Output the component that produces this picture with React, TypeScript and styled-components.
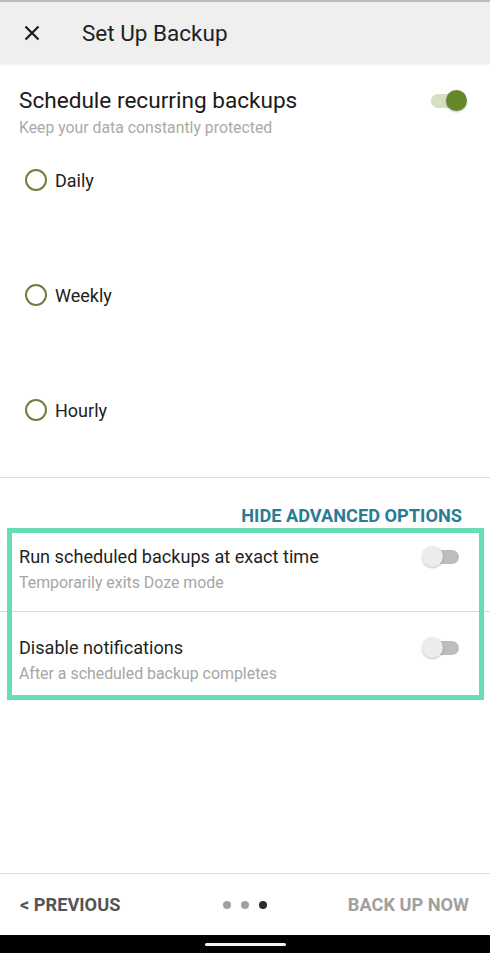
import * as React from "react"
import styled, { createGlobalStyle } from "styled-components"

const GlobalStyle = createGlobalStyle`
html, body {
    margin: 0;
    padding: 0;
    background: #fff;
}
body {
    font-family: Roboto, "Noto Sans", "Liberation Sans", sans-serif;
    color: #212121;
}
`

const Page = styled("div")`
display: flex;
flex-direction: column;
min-height: 953px;
width: 490px;
background: #fff;
`

const Header = styled("header")`
display: flex;
align-items: center;
height: 62px;
border-top: 2px solid #bdbdbd;
background: #efefef;
box-shadow: 0 1px 2px rgba(0, 0, 0, 0.06);
`

const CloseButton = styled("button")`
display: flex;
align-items: center;
justify-content: center;
width: 24px;
height: 24px;
margin: 0 38px 0 20px;
padding: 0;
border: none;
background: none;
`

const Title = styled("h1")`
margin: 0;
font-size: 22.5px;
font-weight: 400;
color: #212121;
`

const Schedule = styled("section")`
padding: 23px 0 0 19px;
`

const ScheduleHead = styled("div")`
display: flex;
align-items: flex-start;
justify-content: space-between;
padding-right: 28px;
`

const HeadTitle = styled("div")`
font-size: 22.6px;
line-height: 28px;
color: #1a1a1a;
`

const HeadSub = styled("div")`
margin-top: 3px;
font-size: 15.8px;
line-height: 20px;
color: #aaaaaa;
`

const RadioList = styled("div")`
display: flex;
flex-direction: column;
gap: 67px;
margin-top: 18px;
padding-bottom: 43px;
`

const RadioRow = styled("label")`
display: flex;
align-items: center;
height: 48px;
gap: 8px;
padding-left: 6px;
font-size: 18px;
color: #212121;
`

const RadioCircle = styled("span")`
box-sizing: border-box;
width: 22px;
height: 22px;
border-radius: 50%;
border: 2.5px solid #6f7f3f;
`

const Divider = styled("hr")`
margin: 0;
border: none;
border-top: 1px solid #dcdcdc;
`

const AdvancedLink = styled("div")`
margin-top: 28px;
padding-right: 28px;
text-align: right;
font-size: 18.2px;
line-height: 20px;
font-weight: 700;
color: #2a7c95;
`

const Advanced = styled("div")`
position: relative;

&::after {
    content: "";
    position: absolute;
    top: 2px;
    left: 7px;
    right: 6px;
    bottom: 2px;
    border: 5px solid #66dcb7;
    pointer-events: none;
}
`

const OptionRow = styled("div")`
display: flex;
align-items: flex-start;
justify-content: space-between;
padding: 20px 31px 18px 19px;

& + hr + & {
    padding-top: 25px;
}
`

const OptionTitle = styled("div")`
font-size: 18.1px;
line-height: 22px;
color: #1f1f1f;
`

const OptionSub = styled("div")`
margin-top: 5px;
font-size: 15.9px;
line-height: 20px;
color: #a6a6a6;
`

const SwitchTrack = styled("span")<{ $on?: boolean }>`
position: relative;
display: block;
flex-shrink: 0;
width: 31px;
height: 14px;
margin-top: ${p => (p.$on ? "7px" : "4px")};
border-radius: 7px;
background: ${p => (p.$on ? "#d4dfc4" : "#bdbdbd")};
`

const SwitchThumb = styled("span")<{ $on?: boolean }>`
position: absolute;
top: -4px;
left: ${p => (p.$on ? "15px" : "-6px")};
width: 21px;
height: 21px;
border-radius: 50%;
background: ${p => (p.$on ? "#66872c" : "#ececec")};
box-shadow: 0 1px 2px rgba(0, 0, 0, 0.25);
`

const Spacer = styled("div")`
flex-grow: 1;
`

const Footer = styled("footer")`
display: flex;
align-items: center;
justify-content: space-between;
height: 61px;
padding: 0 21px 0 20px;
border-top: 1px solid #dcdcdc;
font-size: 18.2px;
font-weight: 700;
`

const FooterButton = styled("span")<{ $muted?: boolean }>`
width: 130px;
color: ${p => (p.$muted ? "#a0a0a0" : "#555555")};
text-align: ${p => (p.$muted ? "right" : "left")};
`

const Dots = styled("div")`
display: flex;
gap: 10px;
`

const Dot = styled("span")<{ $active?: boolean }>`
width: 8px;
height: 8px;
border-radius: 50%;
background: ${p => (p.$active ? "#2b2b2b" : "#a0a0a0")};
`

const NavBar = styled("div")`
display: flex;
justify-content: center;
align-items: center;
height: 18px;
background: #000;
`

const NavPill = styled("span")`
width: 81px;
height: 3px;
border-radius: 2px;
background: #f2f2f2;
`

const Switch = ({ on }: { on?: boolean }) => (
    <SwitchTrack $on={on}>
        <SwitchThumb $on={on} />
    </SwitchTrack>
)

const frequencies = ["Daily", "Weekly", "Hourly"]

const options = [
    { title: "Run scheduled backups at exact time", sub: "Temporarily exits Doze mode" },
    { title: "Disable notifications", sub: "After a scheduled backup completes" },
]

export default function App() {
    return <>
        <GlobalStyle />
        <Page>
            <Header>
                <CloseButton aria-label="Close">
                    <svg width="16" height="16" viewBox="0 0 16 16">
                        <path d="M1.5 1.5 L14.5 14.5 M14.5 1.5 L1.5 14.5" stroke="#1a1a1a" strokeWidth="2.2" />
                    </svg>
                </CloseButton>
                <Title>Set Up Backup</Title>
            </Header>
            <Schedule>
                <ScheduleHead>
                    <div>
                        <HeadTitle>Schedule recurring backups</HeadTitle>
                        <HeadSub>Keep your data constantly protected</HeadSub>
                    </div>
                    <Switch on />
                </ScheduleHead>
                <RadioList>
                    {frequencies.map(f => (
                        <RadioRow key={f}>
                            <RadioCircle />
                            {f}
                        </RadioRow>
                    ))}
                </RadioList>
            </Schedule>
            <Divider />
            <AdvancedLink>HIDE ADVANCED OPTIONS</AdvancedLink>
            <Advanced>
                {options.map((o, i) => (
                    <React.Fragment key={o.title}>
                        {i > 0 && <Divider />}
                        <OptionRow>
                            <div>
                                <OptionTitle>{o.title}</OptionTitle>
                                <OptionSub>{o.sub}</OptionSub>
                            </div>
                            <Switch />
                        </OptionRow>
                    </React.Fragment>
                ))}
            </Advanced>
            <Spacer />
            <Footer>
                <FooterButton>&lt; PREVIOUS</FooterButton>
                <Dots>
                    <Dot />
                    <Dot />
                    <Dot $active />
                </Dots>
                <FooterButton $muted>BACK UP NOW</FooterButton>
            </Footer>
            <NavBar>
                <NavPill />
            </NavBar>
        </Page>
    </>
}
